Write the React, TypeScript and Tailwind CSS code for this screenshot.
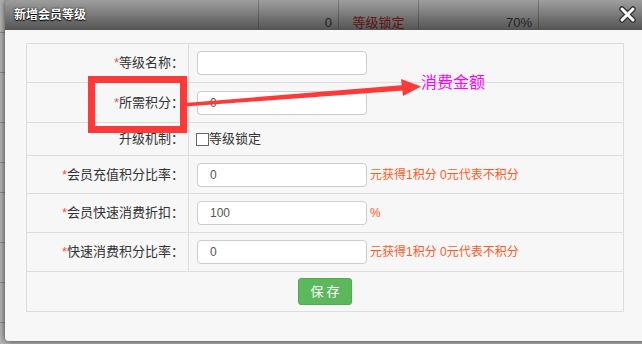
import React from "react";

const font = "font-['Liberation_Sans','Noto_Sans_CJK_SC',sans-serif]";

function Label({ text, required = true }: { text: string; required?: boolean }) {
  return (
    <div className="w-[162px] shrink-0 h-full flex items-center justify-end pr-[4px] border-r border-[#dddddd] text-[13px] text-[#333333]">
      {required && <span className="text-[#ff4d4d]">*</span>}
      <span>{text}</span>
    </div>
  );
}

function Field({ value, hint }: { value: string; hint?: string }) {
  return (
    <div className="flex items-center pl-[8px]">
      <div className="w-[170px] h-[24px] bg-white border border-[#cccccc] rounded-[4px] flex items-center pl-[12px] text-[12px] text-[#555555]">
        {value}
      </div>
      {hint && <span className="ml-[3px] text-[12px] text-[#ff5a1f]">{hint}</span>}
    </div>
  );
}

export default function App() {
  const bgRows = [40, 50, 40, 30, 50, 40, 40, 30];
  return (
    <div className={`relative w-[642px] h-[344px] overflow-hidden bg-[#b4b4b4] ${font}`}>
      {/* background page */}
      <div className="flex flex-col">
        <div className="h-[33px] flex border-b border-[#8c8c8c]">
          <div className="w-[259px] border-r border-[#8c8c8c]" />
          <div className="w-[80px] border-r border-[#8c8c8c] flex justify-end pr-[6px] pt-[13px] text-[13px] text-[#3a3a3a]">0</div>
          <div className="w-[80px] border-r border-[#8c8c8c] flex justify-center pt-[13px] text-[13px] text-[#a82424]">等级锁定</div>
          <div className="w-[120px] border-r border-[#8c8c8c] flex justify-end pr-[6px] pt-[13px] text-[13px] text-[#3a3a3a]">70%</div>
          <div className="flex-1" />
        </div>
        {bgRows.map((h, i) => (
          <div key={i} className="border-b border-[#8c8c8c]" style={{ height: h }} />
        ))}
      </div>

      {/* dialog window */}
      <div className="absolute left-[5px] top-0 w-[660px] h-[341px] rounded-[4px] shadow-[0_0_6px_rgba(0,0,0,0.7)] flex flex-col overflow-hidden">
        <div className="h-[30px] shrink-0 flex items-center justify-between bg-gradient-to-b from-[rgba(0,0,0,0.12)] to-[rgba(0,0,0,0.52)] border-b border-[#555555]">
          <span className="pl-[9px] text-[12px] font-bold text-white [text-shadow:0_0_2px_#000,0_1px_1px_#000]">新增会员等级</span>
          <svg width="17" height="17" viewBox="0 0 17 17" className="mr-[29px]">
            <path d="M3 3 L14 14 M14 3 L3 14" stroke="#333333" strokeWidth="5.5" strokeLinecap="round" />
            <path d="M3 3 L14 14 M14 3 L3 14" stroke="#ffffff" strokeWidth="3" strokeLinecap="round" />
          </svg>
        </div>
        <div className="flex-1 bg-[#f7f7f7] pt-[13px] pl-[21px]">
          <div className="w-[598px] border border-[#dddddd] flex flex-col">
            <div className="h-[38px] flex">
              <Label text="等级名称：" />
              <Field value="" />
            </div>
            <div className="h-[40px] flex border-t border-[#dddddd]">
              <Label text="所需积分：" />
              <Field value="0" />
            </div>
            <div className="h-[33px] flex border-t border-[#dddddd]">
              <Label text="升级机制：" required={false} />
              <div className="flex items-center pl-[7px] text-[13px] text-[#333333]">
                <span className="w-[13px] h-[13px] border border-[#666666] bg-white" />
                <span>等级锁定</span>
              </div>
            </div>
            <div className="h-[38px] flex border-t border-[#dddddd]">
              <Label text="会员充值积分比率：" />
              <Field value="0" hint="元获得1积分 0元代表不积分" />
            </div>
            <div className="h-[39px] flex border-t border-[#dddddd]">
              <Label text="会员快速消费折扣：" />
              <Field value="100" hint="%" />
            </div>
            <div className="h-[39px] flex border-t border-[#dddddd]">
              <Label text="快速消费积分比率：" />
              <Field value="0" hint="元获得1积分 0元代表不积分" />
            </div>
            <div className="h-[40px] flex items-center justify-center border-t border-[#dddddd]">
              <button className="w-[54px] h-[27px] rounded-[3px] bg-[#5cb85c] border border-[#4cae4c] text-white text-[13px] tracking-[3px] pl-[3px]">
                保存
              </button>
            </div>
          </div>
        </div>
      </div>

      {/* annotation overlay */}
      <svg className="absolute left-0 top-0 pointer-events-none" width="642" height="344">
        <rect x="91.5" y="79.5" width="92" height="50" fill="none" stroke="#ff3838" strokeWidth="7" />
        <polygon points="185,103 404,85 404,90.5 185,106.5" fill="#ff3838" />
        <polygon points="401,79 421,86.5 403,96" fill="#ff3838" />
      </svg>
      <span className="absolute left-[421px] top-[74px] text-[16px] leading-[18px] text-[#ff00ff]">消费金额</span>
    </div>
  );
}
